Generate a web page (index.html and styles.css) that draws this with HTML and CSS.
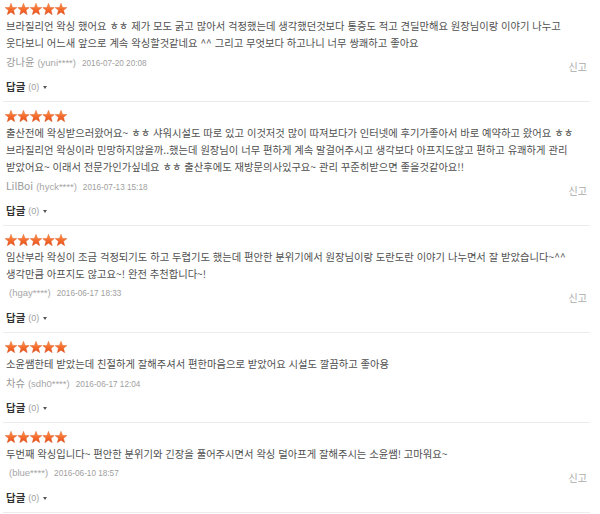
FILE: index.html
```html
<!DOCTYPE html>
<html lang="ko">
<head>
<meta charset="utf-8">
<title>후기</title>
<link rel="stylesheet" href="styles.css">
</head>
<body>
<svg class="defs" width="0" height="0" aria-hidden="true">
  <defs>
    <linearGradient id="starGrad" x1="0" y1="0" x2="0" y2="1">
      <stop offset="0" stop-color="#ff9a4a"/>
      <stop offset="0.55" stop-color="#f56a2c"/>
      <stop offset="1" stop-color="#e2501c"/>
    </linearGradient>
    <symbol id="star" viewBox="0 0 12 12">
      <polygon points="6,0.3 7.6,4.4 11.9,4.6 8.55,7.35 9.7,11.7 6,9.25 2.3,11.7 3.45,7.35 0.1,4.6 4.4,4.4" fill="url(#starGrad)" stroke="#d9531e" stroke-width="0.4" stroke-linejoin="round"/>
    </symbol>
  </defs>
</svg>

<ul class="reviews">
  <li class="review">
    <svg class="stars" width="62" height="12" viewBox="0 0 62 12"><use href="#star" x="0" width="12" height="12"/><use href="#star" x="12.5" width="12" height="12"/><use href="#star" x="25" width="12" height="12"/><use href="#star" x="37.5" width="12" height="12"/><use href="#star" x="50" width="12" height="12"/></svg>
    <p class="body">브라질리언 왁싱 했어요 ㅎㅎ 제가 모도 굵고 많아서 걱정했는데 생각했던것보다 통증도 적고 견딜만해요 원장님이랑 이야기 나누고<br>웃다보니 어느새 앞으로 계속 왁싱할것같네요 ^^ 그리고 무엇보다 하고나니 너무 쌍쾌하고 좋아요</p>
    <div class="meta-row">
      <div class="meta"><span class="name">강나윤</span><span class="uid">(yuni****)</span><span class="date">2016-07-20 20:08</span></div>
      <a class="report">신고</a>
    </div>
    <div class="reply"><span class="reply-label">답글</span><span class="count">(0)</span><span class="caret"></span></div>
  </li>

  <li class="review">
    <svg class="stars" width="62" height="12" viewBox="0 0 62 12"><use href="#star" x="0" width="12" height="12"/><use href="#star" x="12.5" width="12" height="12"/><use href="#star" x="25" width="12" height="12"/><use href="#star" x="37.5" width="12" height="12"/><use href="#star" x="50" width="12" height="12"/></svg>
    <p class="body">출산전에 왁싱받으러왔어요~ ㅎㅎ 샤워시설도 따로 있고 이것저것 많이 따져보다가 인터넷에 후기가좋아서 바로 예약하고 왔어요 ㅎㅎ<br>브라질리언 왁싱이라 민망하지않을까..했는데 원장님이 너무 편하게 계속 말걸어주시고 생각보다 아프지도않고 편하고 유쾌하게 관리<br>받았어요~ 이래서 전문가인가싶네요 ㅎㅎ 출산후에도 재방문의사있구요~ 관리 꾸준히받으면 좋을것같아요!!</p>
    <div class="meta-row">
      <div class="meta"><span class="name">LilBoi</span><span class="uid">(hyck****)</span><span class="date">2016-07-13 15:18</span></div>
      <a class="report">신고</a>
    </div>
    <div class="reply"><span class="reply-label">답글</span><span class="count">(0)</span><span class="caret"></span></div>
  </li>

  <li class="review">
    <svg class="stars" width="62" height="12" viewBox="0 0 62 12"><use href="#star" x="0" width="12" height="12"/><use href="#star" x="12.5" width="12" height="12"/><use href="#star" x="25" width="12" height="12"/><use href="#star" x="37.5" width="12" height="12"/><use href="#star" x="50" width="12" height="12"/></svg>
    <p class="body">임산부라 왁싱이 조금 걱정되기도 하고 두렵기도 했는데 편안한 분위기에서 원장님이랑 도란도란 이야기 나누면서 잘 받았습니다~^^<br>생각만큼 아프지도 않고요~! 완전 추천합니다~!</p>
    <div class="meta-row">
      <div class="meta"><span class="name"></span><span class="uid">(hgay****)</span><span class="date">2016-06-17 18:33</span></div>
      <a class="report">신고</a>
    </div>
    <div class="reply"><span class="reply-label">답글</span><span class="count">(0)</span><span class="caret"></span></div>
  </li>

  <li class="review">
    <svg class="stars" width="62" height="12" viewBox="0 0 62 12"><use href="#star" x="0" width="12" height="12"/><use href="#star" x="12.5" width="12" height="12"/><use href="#star" x="25" width="12" height="12"/><use href="#star" x="37.5" width="12" height="12"/><use href="#star" x="50" width="12" height="12"/></svg>
    <p class="body">소윤쌤한테 받았는데 친절하게 잘해주셔서 편한마음으로 받았어요 시설도 깔끔하고 좋아용</p>
    <div class="meta-row">
      <div class="meta"><span class="name">차슈</span><span class="uid">(sdh0****)</span><span class="date">2016-06-17 12:04</span></div>
    </div>
    <div class="reply"><span class="reply-label">답글</span><span class="count">(0)</span><span class="caret"></span></div>
  </li>

  <li class="review">
    <svg class="stars" width="62" height="12" viewBox="0 0 62 12"><use href="#star" x="0" width="12" height="12"/><use href="#star" x="12.5" width="12" height="12"/><use href="#star" x="25" width="12" height="12"/><use href="#star" x="37.5" width="12" height="12"/><use href="#star" x="50" width="12" height="12"/></svg>
    <p class="body">두번째 왁싱입니다~ 편안한 분위기와 긴장을 풀어주시면서 왁싱 덜아프게 잘해주시는 소윤쌤! 고마워요~</p>
    <div class="meta-row">
      <div class="meta"><span class="name"></span><span class="uid">(blue****)</span><span class="date">2016-06-10 18:57</span></div>
      <a class="report">신고</a>
    </div>
    <div class="reply"><span class="reply-label">답글</span><span class="count">(0)</span><span class="caret"></span></div>
  </li>
</ul>
</body>
</html>
```

FILE: styles.css
```css
html, body {
  margin: 0;
  padding: 0;
  background: #ffffff;
}

body {
  font-family: "Noto Sans CJK KR", "Noto Sans", sans-serif;
  font-size: 10px;
  color: #555555;
  overflow: hidden;
}

.defs {
  position: absolute;
  width: 0;
  height: 0;
  overflow: hidden;
}

.reviews {
  list-style: none;
  margin: 0 0 0 3px;
  padding: 0;
  width: 587px;
}

.review {
  display: flex;
  flex-direction: column;
  padding: 8px 3px 6px 3px;
  border-bottom: 1px solid #ececec;
}

.review:first-child {
  padding-top: 3px;
}

.stars {
  display: block;
  width: 62px;
  height: 12px;
  margin: 0 0 2px -1px;
}

.body {
  margin: 0;
  font-size: 10.3px;
  line-height: 17px;
  color: #505050;
  white-space: nowrap;
}

.meta-row {
  display: flex;
  justify-content: space-between;
  align-items: flex-start;
  min-height: 22px;
  margin-top: 2px;
}

.meta {
  display: flex;
  align-items: baseline;
  line-height: 17px;
}

.name {
  color: #999999;
  font-size: 10.3px;
  margin-right: 3px;
}

.uid {
  font-family: "Liberation Sans", Arial, sans-serif;
  font-size: 9.5px;
  color: #a6a6a6;
  margin-right: 6px;
}

.date {
  font-family: "Liberation Sans", Arial, sans-serif;
  font-size: 8.2px;
  color: #a0a0a0;
}

.report {
  margin-top: 5px;
  line-height: 17px;
  color: #aaaaaa;
  font-size: 10px;
  cursor: pointer;
}

.reply {
  display: flex;
  align-items: center;
  height: 17px;
  margin-top: 3px;
}

.reply-label {
  font-weight: bold;
  color: #333333;
  font-size: 10.5px;
}

.count {
  font-family: "Liberation Sans", Arial, sans-serif;
  font-size: 9px;
  color: #a0a0a0;
  margin-left: 3px;
}

.caret {
  width: 0;
  height: 0;
  border-left: 2.5px solid transparent;
  border-right: 2.5px solid transparent;
  border-top: 3px solid #555555;
  margin-left: 4px;
  margin-top: 1px;
}
```
